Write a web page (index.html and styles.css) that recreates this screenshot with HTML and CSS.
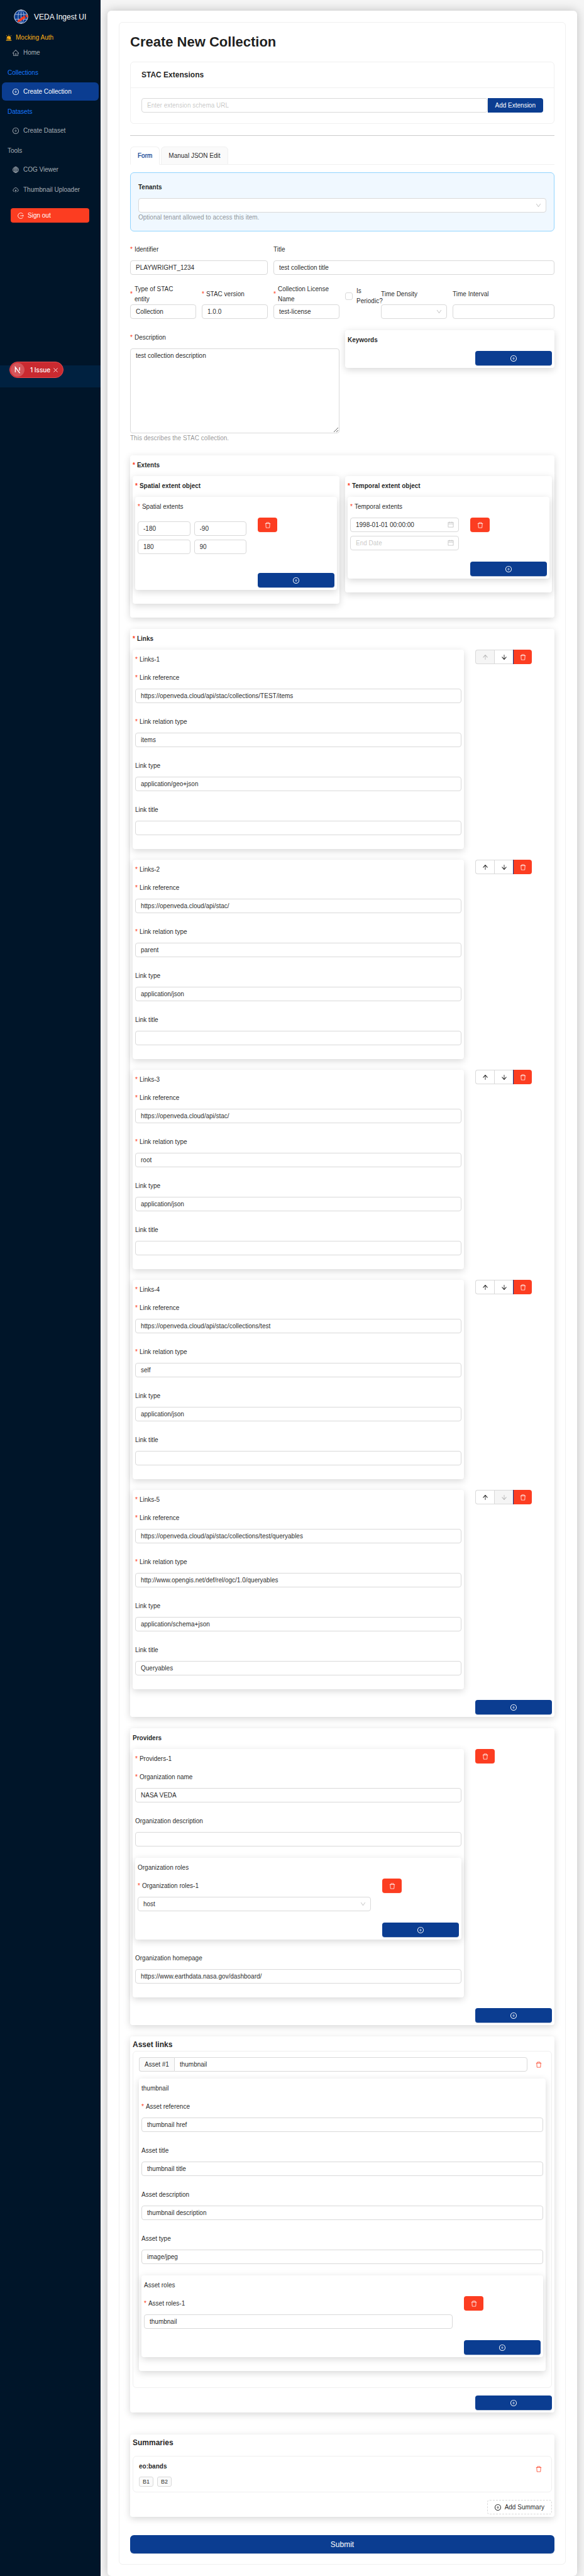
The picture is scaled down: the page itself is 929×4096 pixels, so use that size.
FILE: index.html
```html
<!DOCTYPE html>
<html lang="en">
<head>
<meta charset="utf-8">
<title>VEDA Ingest UI</title>
<link rel="stylesheet" href="styles.css">
</head>
<body>
<svg class="sprite" aria-hidden="true">
  <symbol id="plus" viewBox="64 64 896 896"><path d="M696 480H544V328c0-4.400-3.600-8-8-8h-48c-4.400 0-8 3.600-8 8v152H328c-4.400 0-8 3.600-8 8v48c0 4.400 3.600 8 8 8h152v152c0 4.400 3.600 8 8 8h48c4.400 0 8-3.600 8-8V544h152c4.400 0 8-3.600 8-8v-48c0-4.400-3.600-8-8-8z"/><path d="M512 64C264.600 64 64 264.600 64 512s200.600 448 448 448 448-200.600 448-448S759.400 64 512 64zm0 820c-205.400 0-372-166.600-372-372s166.600-372 372-372 372 166.600 372 372-166.600 372-372 372z"/></symbol>
  <symbol id="trash" viewBox="64 64 896 896"><path d="M360 184h304v72h72v-80c0-35.300-28.700-64-64-64H352c-35.300 0-64 28.700-64 64v80h72v-72zm504 72H160c-17.700 0-32 14.300-32 32v32c0 4.400 3.600 8 8 8h60.400l24.700 523c1.600 34.100 29.800 61 63.900 61h454c34.200 0 62.300-26.800 63.900-61l24.700-523H888c4.400 0 8-3.600 8-8v-32c0-17.700-14.300-32-32-32zM731.300 840H292.700l-24.200-512h487l-24.200 512z"/></symbol>
  <symbol id="up" viewBox="64 64 896 896"><path d="M868 545.500L536.100 163a31.960 31.960 0 00-48.300 0L156 545.500a7.970 7.970 0 006 13.200h81c4.600 0 9-2 12.100-5.500L474 300.900V864c0 4.400 3.600 8 8 8h60c4.400 0 8-3.600 8-8V300.900l218.900 252.300c3 3.500 7.400 5.500 12.100 5.500h81c6.800 0 10.500-8 6-13.200z"/></symbol>
  <symbol id="down" viewBox="64 64 896 896"><path d="M862 465.300h-81c-4.600 0-9 2-12.100 5.500L550 723.100V160c0-4.400-3.600-8-8-8h-60c-4.400 0-8 3.600-8 8v563.100L255.100 470.800c-3-3.500-7.400-5.500-12.100-5.500h-81c-6.800 0-10.500 8.100-6 13.200L487.900 861a31.960 31.960 0 0048.300 0L868 478.500c4.500-5.200.8-13.200-6-13.200z"/></symbol>
  <symbol id="chevron" viewBox="64 64 896 896"><path d="M884 256h-75c-5.100 0-9.900 2.500-12.900 6.600L512 654.200 227.900 262.600c-3-4.100-7.800-6.600-12.900-6.600h-75c-6.500 0-10.300 7.400-6.500 12.700l352.600 486.100c12.800 17.600 39 17.600 51.700 0l352.600-486.100c3.900-5.300.1-12.700-6.400-12.700z"/></symbol>
  <symbol id="calendar" viewBox="64 64 896 896"><path d="M880 184H712v-64c0-4.400-3.600-8-8-8h-56c-4.400 0-8 3.600-8 8v64H384v-64c0-4.400-3.600-8-8-8h-56c-4.400 0-8 3.600-8 8v64H144c-17.700 0-32 14.300-32 32v664c0 17.700 14.300 32 32 32h736c17.700 0 32-14.300 32-32V216c0-17.700-14.300-32-32-32zm-40 656H184V460h656v380zM184 392V256h128v48c0 4.400 3.600 8 8 8h56c4.400 0 8-3.600 8-8v-48h256v48c0 4.400 3.600 8 8 8h56c4.400 0 8-3.600 8-8v-48h128v136H184z"/></symbol>
  <symbol id="home" viewBox="64 64 896 896"><path d="M946.500 505L560.100 118.800l-25.900-25.900a31.500 31.500 0 00-44.400 0L77.500 505a63.900 63.900 0 00-18.800 46c.4 35.200 29.700 63.300 64.900 63.300h42.500V940h691.800V614.300h43.400c17.100 0 33.200-6.700 45.300-18.800a63.600 63.600 0 0018.700-45.300c0-17-6.700-33.100-18.800-45.200zM568 868H456V664h112v204zm217.900-325.700V868H632V640c0-22.100-17.900-40-40-40H432c-22.100 0-40 17.900-40 40v228H238.100V542.300h-96l370-369.700 23.100 23.100L882 542.300h-96.100z"/></symbol>
  <symbol id="globe" viewBox="0 0 14 14"><g fill="none" stroke="currentColor"><circle cx="7" cy="7" r="6.400"/><ellipse cx="7" cy="7" rx="3" ry="6.400"/><path d="M7 .6v12.800M.6 7h12.800M1.500 3.800h11M1.500 10.200h11"/></g></symbol>
  <symbol id="upload" viewBox="0 0 14 14"><g fill="none" stroke="currentColor" stroke-width="1.200"><path d="M4.400 10.600H3.600A2.900 2.900 0 0 1 3 5a4.200 4.200 0 0 1 8 0 2.900 2.900 0 0 1-.6 5.600h-.8M7 12.500V7"/><path d="M4.800 8.800 7 6l2.200 2.800z" fill="currentColor" stroke="none"/></g></symbol>
  <symbol id="logout" viewBox="0 0 14 14"><path d="M11.800 3A6.200 6.200 0 1 0 11.800 11M6 7h6" fill="none" stroke="currentColor" stroke-width="1.200"/><path d="M11.300 4.900 13.900 7l-2.600 2.100z"/></symbol>
  <symbol id="alert" viewBox="0 0 14 14"><path d="M2.500 11V7.500a4.500 4.500 0 0 1 9 0V11zM1 12h12v1.500H1zM6.500 0h1v2h-1zM1 2l.8-.7 1.300 1.400-.8.700zM13 2l-.8-.7-1.300 1.400.8.700z"/><path d="M4.500 11V7.500h1V11z" fill="#001529"/></symbol>
</svg>

<div class="layout">
  <aside class="sidebar">
    <div class="sidebar-content">
      <div class="brand">
        <svg class="logo" viewBox="0 0 32 32" aria-hidden="true">
          <circle cx="16" cy="16" r="15" fill="#0b3d91" stroke="#fff" stroke-width="1.200"/>
          <g fill="none" stroke="#b9c8e6" stroke-width="1.200"><ellipse cx="16" cy="16" rx="6.500" ry="15"/><path d="M16 1v30M2.500 11h27M2.500 21.500h27"/></g>
          <path d="M9 24 21 15l2.500-.5 3 4L13 27l-4 1-1.200-1.500z" fill="#fc3d21"/><path d="M25.500 13l3.500-2 2.500 5.500-3 1.500z" fill="#fc3d21"/>
        </svg>
        <span>VEDA Ingest UI</span>
      </div>
      <div class="mock"><svg class="icon"><use href="#alert"/></svg>Mocking Auth</div>
      <nav class="menu">
        <a class="menu-item" href="#"><svg class="icon"><use href="#home"/></svg>Home</a>
        <div class="menu-title menu-title--blue">Collections</div>
        <a class="menu-item menu-item--active" href="#"><svg class="icon"><use href="#plus"/></svg>Create Collection</a>
        <div class="menu-title menu-title--blue">Datasets</div>
        <a class="menu-item" href="#"><svg class="icon"><use href="#plus"/></svg>Create Dataset</a>
        <div class="menu-title">Tools</div>
        <a class="menu-item" href="#"><svg class="icon"><use href="#globe"/></svg>COG Viewer</a>
        <a class="menu-item" href="#"><svg class="icon"><use href="#upload"/></svg>Thumbnail Uploader</a>
      </nav>
      <button class="sign-out" type="button"><svg class="icon"><use href="#logout"/></svg>Sign out</button>
    </div>
    <div class="sidebar-trigger">
      <div class="issue">
        <span class="issue-mark"><svg viewBox="0 0 20 20" aria-hidden="true"><path d="M6 14.500v-9l8 10.500M13.500 5.500v6" fill="none" stroke="#fff" stroke-width="1.600"/></svg></span>
        <span>1 Issue</span>
        <button class="issue-close" type="button" aria-label="Close"><svg viewBox="0 0 8 8"><path d="M.5.5l7 7M7.500.5l-7 7" stroke="#fff" fill="none"/></svg></button>
      </div>
    </div>
  </aside>

  <main class="main">
    <div class="sheet">
      <div class="frame">
        <h1>Create New Collection</h1>

        <section class="ext">
          <h2 class="ext-head">STAC Extensions</h2>
          <div class="ext-body">
            <input class="control ext-input" type="text" placeholder="Enter extension schema URL" aria-label="Extension schema URL">
            <button class="btn ext-btn" type="button">Add Extension</button>
          </div>
        </section>
        <hr>
        <div class="tabs" role="tablist">
          <button class="tab tab--active" role="tab" type="button">Form</button>
          <button class="tab" role="tab" type="button">Manual JSON Edit</button>
        </div>

        <form>
          <section class="tenants">
            <label class="label strong" for="tenants">Tenants</label>
            <div class="select"><select class="control" id="tenants"><option></option></select><svg><use href="#chevron"/></svg></div>
            <p class="help">Optional tenant allowed to access this item.</p>
          </section>

          <div class="grid row-id">
            <div class="field span-8"><label class="label req" for="ident">Identifier</label><input class="control" id="ident" value="PLAYWRIGHT_1234"></div>
            <div class="field span-16"><label class="label" for="title">Title</label><input class="control" id="title" value="test collection title"></div>
          </div>
          <div class="grid row-meta">
            <div class="field span-4"><label class="label req" for="type">Type of STAC entity</label><input class="control" id="type" value="Collection"></div>
            <div class="field span-4"><label class="label req" for="version">STAC version</label><input class="control" id="version" value="1.0.0"></div>
            <div class="field span-4"><label class="label req" for="license">Collection License Name</label><input class="control" id="license" value="test-license"></div>
            <label class="check span-2"><input type="checkbox"><span>Is Periodic?</span></label>
            <div class="field span-4"><label class="label" for="density">Time Density</label><div class="select"><select class="control" id="density"><option></option></select><svg><use href="#chevron"/></svg></div></div>
            <div class="field span-6"><label class="label" for="interval">Time Interval</label><input class="control" id="interval"></div>
          </div>
          <div class="grid row-desc">
            <div class="field span-12"><label class="label req" for="desc">Description</label><textarea class="control" id="desc">test collection description</textarea><p class="help">This describes the STAC collection.</p></div>
            <section class="panel span-12">
              <h3 class="label strong">Keywords</h3>
              <button class="btn btn-add" type="button" aria-label="Add keyword"><svg class="icon"><use href="#plus"/></svg></button>
            </section>
          </div>

          <section class="panel panel--open">
            <h3 class="label strong req">Extents</h3>
            <div class="halves">
              <section class="panel panel--open">
                <h4 class="label strong req">Spatial extent object</h4>
                <section class="panel">
                  <h5 class="label req">Spatial extents</h5>
                  <div class="item">
                    <div class="bbox">
                      <input class="control" value="-180" aria-label="West"><input class="control" value="-90" aria-label="South">
                      <input class="control" value="180" aria-label="East"><input class="control" value="90" aria-label="North">
                    </div>
                    <button class="btn btn-del" type="button" aria-label="Delete"><svg class="icon"><use href="#trash"/></svg></button>
                  </div>
                  <button class="btn btn-add after-bbox" type="button" aria-label="Add"><svg class="icon"><use href="#plus"/></svg></button>
                </section>
              </section>
              <section class="panel panel--open">
                <h4 class="label strong req">Temporal extent object</h4>
                <section class="panel">
                  <h5 class="label req">Temporal extents</h5>
                  <div class="item">
                    <div class="dates">
                      <div class="date"><input class="control" value="1998-01-01 00:00:00" aria-label="Start date"><svg><use href="#calendar"/></svg></div>
                      <div class="date"><input class="control" placeholder="End Date" aria-label="End date"><svg><use href="#calendar"/></svg></div>
                    </div>
                    <button class="btn btn-del" type="button" aria-label="Delete"><svg class="icon"><use href="#trash"/></svg></button>
                  </div>
                  <button class="btn btn-add after-field" type="button" aria-label="Add"><svg class="icon"><use href="#plus"/></svg></button>
                </section>
              </section>
            </div>
          </section>

          <section class="panel">
            <h3 class="label strong req">Links</h3>
            <div class="items">
              <div class="item">
                <section class="panel panel--open">
                  <h4 class="label req">Links-1</h4>
                  <div class="fields">
                    <div class="field"><label class="label req" for="l1a">Link reference</label><input class="control" id="l1a" value="https://openveda.cloud/api/stac/collections/TEST/items"></div>
                    <div class="field"><label class="label req" for="l1b">Link relation type</label><input class="control" id="l1b" value="items"></div>
                    <div class="field"><label class="label" for="l1c">Link type</label><input class="control" id="l1c" value="application/geo+json"></div>
                    <div class="field"><label class="label" for="l1d">Link title</label><input class="control" id="l1d"></div>
                  </div>
                </section>
                <div class="tools"><button class="tool" type="button" disabled aria-label="Move up"><svg class="icon"><use href="#up"/></svg></button><button class="tool" type="button" aria-label="Move down"><svg class="icon"><use href="#down"/></svg></button><button class="tool tool--del" type="button" aria-label="Delete"><svg class="icon"><use href="#trash"/></svg></button></div>
              </div>
              <div class="item">
                <section class="panel panel--open">
                  <h4 class="label req">Links-2</h4>
                  <div class="fields">
                    <div class="field"><label class="label req" for="l2a">Link reference</label><input class="control" id="l2a" value="https://openveda.cloud/api/stac/"></div>
                    <div class="field"><label class="label req" for="l2b">Link relation type</label><input class="control" id="l2b" value="parent"></div>
                    <div class="field"><label class="label" for="l2c">Link type</label><input class="control" id="l2c" value="application/json"></div>
                    <div class="field"><label class="label" for="l2d">Link title</label><input class="control" id="l2d"></div>
                  </div>
                </section>
                <div class="tools"><button class="tool" type="button" aria-label="Move up"><svg class="icon"><use href="#up"/></svg></button><button class="tool" type="button" aria-label="Move down"><svg class="icon"><use href="#down"/></svg></button><button class="tool tool--del" type="button" aria-label="Delete"><svg class="icon"><use href="#trash"/></svg></button></div>
              </div>
              <div class="item">
                <section class="panel panel--open">
                  <h4 class="label req">Links-3</h4>
                  <div class="fields">
                    <div class="field"><label class="label req" for="l3a">Link reference</label><input class="control" id="l3a" value="https://openveda.cloud/api/stac/"></div>
                    <div class="field"><label class="label req" for="l3b">Link relation type</label><input class="control" id="l3b" value="root"></div>
                    <div class="field"><label class="label" for="l3c">Link type</label><input class="control" id="l3c" value="application/json"></div>
                    <div class="field"><label class="label" for="l3d">Link title</label><input class="control" id="l3d"></div>
                  </div>
                </section>
                <div class="tools"><button class="tool" type="button" aria-label="Move up"><svg class="icon"><use href="#up"/></svg></button><button class="tool" type="button" aria-label="Move down"><svg class="icon"><use href="#down"/></svg></button><button class="tool tool--del" type="button" aria-label="Delete"><svg class="icon"><use href="#trash"/></svg></button></div>
              </div>
              <div class="item">
                <section class="panel panel--open">
                  <h4 class="label req">Links-4</h4>
                  <div class="fields">
                    <div class="field"><label class="label req" for="l4a">Link reference</label><input class="control" id="l4a" value="https://openveda.cloud/api/stac/collections/test"></div>
                    <div class="field"><label class="label req" for="l4b">Link relation type</label><input class="control" id="l4b" value="self"></div>
                    <div class="field"><label class="label" for="l4c">Link type</label><input class="control" id="l4c" value="application/json"></div>
                    <div class="field"><label class="label" for="l4d">Link title</label><input class="control" id="l4d"></div>
                  </div>
                </section>
                <div class="tools"><button class="tool" type="button" aria-label="Move up"><svg class="icon"><use href="#up"/></svg></button><button class="tool" type="button" aria-label="Move down"><svg class="icon"><use href="#down"/></svg></button><button class="tool tool--del" type="button" aria-label="Delete"><svg class="icon"><use href="#trash"/></svg></button></div>
              </div>
              <div class="item">
                <section class="panel panel--open">
                  <h4 class="label req">Links-5</h4>
                  <div class="fields">
                    <div class="field"><label class="label req" for="l5a">Link reference</label><input class="control" id="l5a" value="https://openveda.cloud/api/stac/collections/test/queryables"></div>
                    <div class="field"><label class="label req" for="l5b">Link relation type</label><input class="control" id="l5b" value="http://www.opengis.net/def/rel/ogc/1.0/queryables"></div>
                    <div class="field"><label class="label" for="l5c">Link type</label><input class="control" id="l5c" value="application/schema+json"></div>
                    <div class="field"><label class="label" for="l5d">Link title</label><input class="control" id="l5d" value="Queryables"></div>
                  </div>
                </section>
                <div class="tools"><button class="tool" type="button" aria-label="Move up"><svg class="icon"><use href="#up"/></svg></button><button class="tool" type="button" disabled aria-label="Move down"><svg class="icon"><use href="#down"/></svg></button><button class="tool tool--del" type="button" aria-label="Delete"><svg class="icon"><use href="#trash"/></svg></button></div>
              </div>
              <button class="btn btn-add" type="button" aria-label="Add link"><svg class="icon"><use href="#plus"/></svg></button>
            </div>
          </section>

          <section class="panel">
            <h3 class="label strong">Providers</h3>
            <div class="items">
              <div class="item">
                <section class="panel panel--open">
                  <h4 class="label req">Providers-1</h4>
                  <div class="fields">
                    <div class="field"><label class="label req" for="org">Organization name</label><input class="control" id="org" value="NASA VEDA"></div>
                    <div class="field"><label class="label" for="orgd">Organization description</label><input class="control" id="orgd"></div>
                    <section class="panel">
                      <h5 class="label">Organization roles</h5>
                      <div class="item">
                        <div class="field"><label class="label req" for="role">Organization roles-1</label><div class="select"><select class="control" id="role"><option>host</option></select><svg><use href="#chevron"/></svg></div></div>
                        <button class="btn btn-del" type="button" aria-label="Delete"><svg class="icon"><use href="#trash"/></svg></button>
                      </div>
                      <button class="btn btn-add after-field" type="button" aria-label="Add role"><svg class="icon"><use href="#plus"/></svg></button>
                    </section>
                    <div class="field"><label class="label" for="orgh">Organization homepage</label><input class="control" id="orgh" value="https://www.earthdata.nasa.gov/dashboard/"></div>
                  </div>
                </section>
                <button class="btn btn-del" type="button" aria-label="Delete"><svg class="icon"><use href="#trash"/></svg></button>
              </div>
              <button class="btn btn-add" type="button" aria-label="Add provider"><svg class="icon"><use href="#plus"/></svg></button>
            </div>
          </section>

          <section class="panel">
            <h3 class="title title--tight">Asset links</h3>
            <div class="box box--asset">
              <div class="asset-name">
                <label class="addon" for="asset">Asset #1</label><input class="control" id="asset" value="thumbnail">
                <button class="icon-btn" type="button" aria-label="Delete asset"><svg class="icon"><use href="#trash"/></svg></button>
              </div>
              <section class="panel panel--open">
                <h4 class="label">thumbnail</h4>
                <div class="fields">
                  <div class="field"><label class="label req" for="aref">Asset reference</label><input class="control" id="aref" value="thumbnail href"></div>
                  <div class="field"><label class="label" for="atitle">Asset title</label><input class="control" id="atitle" value="thumbnail title"></div>
                  <div class="field"><label class="label" for="adesc">Asset description</label><input class="control" id="adesc" value="thumbnail description"></div>
                  <div class="field"><label class="label" for="atype">Asset type</label><input class="control" id="atype" value="image/jpeg"></div>
                  <section class="panel">
                    <h5 class="label">Asset roles</h5>
                    <div class="item">
                      <div class="field"><label class="label req" for="arole">Asset roles-1</label><input class="control" id="arole" value="thumbnail"></div>
                      <button class="btn btn-del" type="button" aria-label="Delete"><svg class="icon"><use href="#trash"/></svg></button>
                    </div>
                    <button class="btn btn-add after-field" type="button" aria-label="Add role"><svg class="icon"><use href="#plus"/></svg></button>
                  </section>
                </div>
              </section>
            </div>
            <button class="btn btn-add after-box" type="button" aria-label="Add asset"><svg class="icon"><use href="#plus"/></svg></button>
          </section>

          <section class="panel panel--summaries">
            <h3 class="title">Summaries</h3>
            <div class="box box--summary">
              <div>
                <h4 class="summary-name">eo:bands</h4>
                <div class="tags"><span class="tag">B1</span><span class="tag">B2</span></div>
              </div>
              <button class="icon-btn" type="button" aria-label="Delete summary"><svg class="icon"><use href="#trash"/></svg></button>
            </div>
            <button class="btn-dashed after-box" type="button"><svg class="icon"><use href="#plus"/></svg>Add Summary</button>
          </section>

          <button class="btn submit" type="submit">Submit</button>
        </form>
      </div>
    </div>
  </main>
</div>
</body>
</html>
```
FILE: styles.css
```css
* { box-sizing: border-box; }
body {
  margin: 0;
  background: #f5f5f5;
  color: rgba(0, 0, 0, 0.88);
  font: 10px/16px "Liberation Sans", Arial, sans-serif;
}
h1, h2, h3, h4, h5, p { margin: 0; font-size: inherit; font-weight: normal; }
button, input, select, textarea { margin: 0; font: inherit; color: inherit; }
a { color: inherit; text-decoration: none; }
svg { display: block; fill: currentColor; }
.sprite { display: none; }
.icon { width: 10px; height: 10px; flex: none; }

.layout { display: flex; align-items: stretch; }

/* Sidebar */
.sidebar { width: 160px; flex: none; background: #001529; color: #fff; z-index: 1; }
.sidebar-content { height: 581px; }
.brand { display: flex; align-items: center; gap: 9px; padding: 15px 0 0 22px; font-size: 12px; }
.logo { width: 23px; height: 23px; }
.mock { display: flex; align-items: center; gap: 6px; padding: 14px 0 1px 9px; color: #faad14; }
.menu { display: flex; flex-direction: column; color: rgba(255, 255, 255, 0.65); }
.menu-item {
  display: flex; align-items: center; gap: 7px;
  height: 29px; margin: 0 3px; padding-left: 17px; border-radius: 6px;
}
.menu-item + .menu-item { margin-top: 3px; }
.menu-item--active { background: #0b3d91; color: #fff; }
.menu-title { height: 27px; margin: 2px 0; padding-left: 12px; line-height: 27px; }
.menu-item + .menu-title { margin-top: 4px; }
.menu-title--blue { color: #1677ff; }
.sign-out {
  display: flex; align-items: center; gap: 6px;
  width: 125px; height: 23px; margin: 15px 0 0 17px; padding: 0 11px;
  border: 0; border-radius: 4px; background: #fc3d21; color: #fff;
}
.sidebar-trigger { position: relative; height: 35px; background: #002140; }
.issue {
  position: absolute; left: 15px; top: -6px;
  display: flex; align-items: center;
  width: 86px; height: 26px; padding: 0 8px 0 1px;
  border: 1px solid #e5484d; border-radius: 13px; background: #ca2a30;
  font-family: Inter, sans-serif; font-weight: 500;
}
.issue-mark { width: 22px; height: 22px; margin-right: 9px; padding: 2px; border-radius: 50%; background: #d5555a; }
.issue-mark svg { width: 18px; height: 18px; }
.issue-close { margin-left: auto; padding: 0; border: 0; background: none; }
.issue-close svg { width: 7px; height: 7px; }

/* Page frame */
.main { flex: 1; min-width: 0; padding: 17px 11px 0; }
.sheet { padding: 18px; border-radius: 6px; background: #fff; box-shadow: 0 0 16px rgba(0, 0, 0, 0.22); }
.frame { padding: 17px; border: 1px solid #f0f0f0; border-radius: 6px; }
h1 { margin-bottom: 18px; font-size: 22px; line-height: 27px; font-weight: bold; }
hr { height: 1px; margin: 18px 0 17px; border: 0; background: #ccc; }

.ext { border: 1px solid #f0f0f0; border-radius: 6px; }
.ext-head { padding: 12px 17px; border-bottom: 1px solid #f0f0f0; font-size: 12px; font-weight: bold; }
.ext-body { display: flex; padding: 16px 17px 17px; }
.ext-input { border-right: 0; border-radius: 4px 0 0 4px; }
.btn.ext-btn { flex: none; padding: 0 12px; border-radius: 0 4px 4px 0; box-shadow: none; }

.tabs { display: flex; gap: 2px; margin-bottom: 12px; box-shadow: inset 0 -1px #f0f0f0; }
.tab { height: 29px; padding: 0 11px; border: 1px solid #f0f0f0; border-radius: 6px 6px 0 0; background: #fafafa; }
.tab--active { border-bottom-color: #fff; background: #fff; color: #0b3d91; text-shadow: 0 0 1px rgba(11, 61, 145, 0.5); }

/* Controls */
.control {
  display: block; width: 100%; min-width: 0; height: 23px; padding: 0 8px;
  border: 1px solid #d9d9d9; border-radius: 4px; background: #fff; outline: 0;
}
.control::placeholder { color: rgba(0, 0, 0, 0.25); }
textarea.control { height: 135px; padding: 3px 8px; resize: vertical; }
select.control { appearance: none; }
.select, .date { position: relative; }
.select svg, .date svg { position: absolute; right: 8px; top: 7px; width: 9px; height: 9px; color: rgba(0, 0, 0, 0.25); pointer-events: none; }
.date svg { top: 6px; width: 10px; height: 10px; }
.label { display: flex; align-items: center; height: 23px; margin-bottom: 6px; }
.req::before { content: "*"; margin-right: 3px; color: #fc3d21; }
.strong { font-weight: bold; }
.help { color: rgba(0, 0, 0, 0.45); }

.btn {
  display: flex; align-items: center; justify-content: center;
  height: 23px; padding: 0; border: 0; border-radius: 4px;
  background: #0b3d91; color: #fff; box-shadow: 0 1px 0 #b5c2d8;
}
.btn-add { width: 122px; margin-left: auto; }
.btn-del { width: 31px; background: #fc3d21; box-shadow: 0 1px 0 #ffece8; }
.after-field { margin-top: 18px; }
.after-bbox { margin-top: 30px; }
.after-box { margin-top: 12px; }

/* Top of the form */
.tenants { padding: 11px 12px 13px; border: 1px solid #91d5ff; border-radius: 6px; background: #f0f8ff; }
.grid { display: grid; grid-template-columns: repeat(24, minmax(0, 1fr)); column-gap: 9px; align-items: start; }
.span-2 { grid-column: span 2; }
.span-4 { grid-column: span 4; }
.span-6 { grid-column: span 6; }
.span-8 { grid-column: span 8; }
.span-12 { grid-column: span 12; }
.span-16 { grid-column: span 16; }
.row-id { margin-top: 17px; }
.row-meta { margin-top: 14px; }
.row-meta .label { height: 33px; margin-bottom: 0; padding-right: 14px; }
.check { display: flex; align-items: center; gap: 6px; padding-top: 4px; }
.check input { appearance: none; width: 12px; height: 12px; flex: none; border: 1px solid #d9d9d9; border-radius: 3px; background: #fff; }
.check span { width: 30px; }
.row-desc { margin: 18px 0 19px; }

/* Panels */
.panel { padding: 4px; border-radius: 4px; background: #fff; box-shadow: 0 3px 12px rgba(0, 0, 0, 0.16); }
.panel--open { padding-bottom: 22px; }
form > .panel + .panel { margin-top: 18px; }
form > .panel--summaries.panel { margin-top: 35px; }
.halves { display: grid; grid-template-columns: 1fr 1fr; gap: 9px; align-items: start; }
.items { display: flex; flex-direction: column; gap: 17px; }
.item { display: grid; grid-template-columns: minmax(0, 1fr) 122px; column-gap: 18px; align-items: start; }
.fields { display: flex; flex-direction: column; gap: 18px; }
.bbox { display: grid; grid-template-columns: 1fr 1fr; gap: 6px; padding-top: 6px; }
.dates { display: grid; gap: 6px; }

.tools { display: flex; }
.tool {
  display: flex; align-items: center; justify-content: center;
  width: 30px; height: 23px; padding: 0;
  border: 1px solid #d9d9d9; border-right: 0; background: #fff;
}
.tool:first-child { border-radius: 4px 0 0 4px; }
.tool:disabled { background: #f5f5f5; color: rgba(0, 0, 0, 0.25); }
.tool--del { border: 0; border-left: 1px solid #0b3d91; border-radius: 0 4px 4px 0; background: #fc3d21; color: #fff; }

/* Assets and summaries */
.title { margin-bottom: 12px; font-size: 12px; line-height: 18px; font-weight: bold; }
.title--tight { margin-bottom: 1px; }
.box { border: 1px solid #f0f0f0; border-radius: 6px; }
.box--asset { padding: 9px 9px 26px; }
.box--summary { display: flex; align-items: center; justify-content: space-between; padding: 8px 9px; }
.asset-name { display: flex; margin-bottom: 11px; }
.addon { flex: none; height: 23px; padding: 3px 8px; border: 1px solid #d9d9d9; border-right: 0; border-radius: 4px 0 0 4px; background: #fafafa; }
.asset-name .control { border-radius: 0 4px 4px 0; }
.icon-btn { display: flex; align-items: center; justify-content: center; flex: none; width: 23px; height: 23px; margin-left: 6px; padding: 0; border: 0; background: none; color: #fc3d21; }
.box--summary .icon-btn { align-self: flex-start; }
.summary-name { margin-bottom: 8px; font-weight: bold; }
.tags { display: flex; gap: 6px; }
.tag { height: 16px; padding: 0 5px; border: 1px solid #d9d9d9; border-radius: 3px; background: #fafafa; font-size: 9px; line-height: 14px; }
.btn-dashed { display: flex; align-items: center; gap: 6px; height: 23px; margin-left: auto; padding: 0 11px; border: 1px dashed #d9d9d9; border-radius: 4px; background: #fff; }
.submit { width: 100%; height: 29px; margin-top: 29px; border-radius: 6px; font-size: 12px; }
```
